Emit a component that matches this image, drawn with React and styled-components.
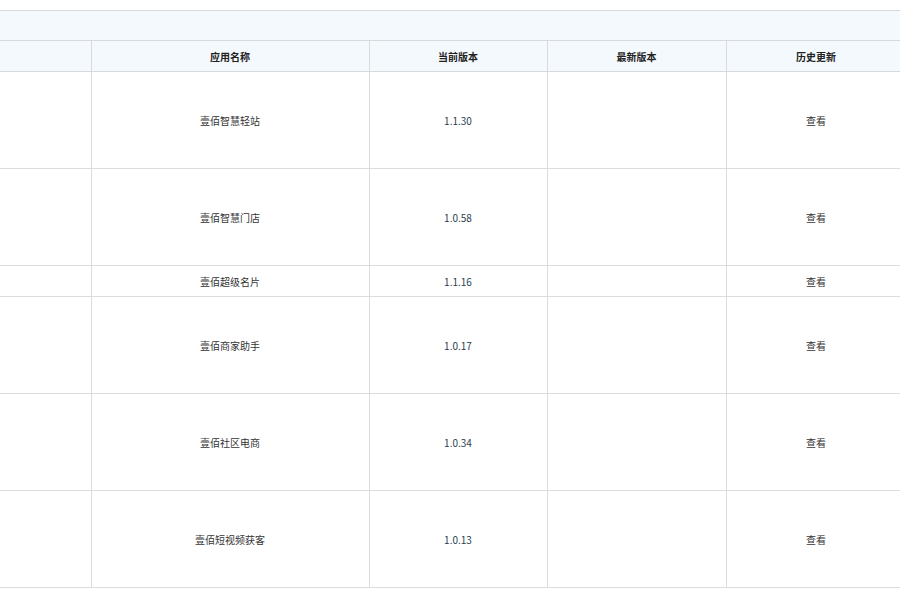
import React from "react";
import styled, { createGlobalStyle } from "styled-components";

const GlobalStyle = createGlobalStyle`
  html, body {
    margin: 0;
    padding: 0;
    background: #ffffff;
    overflow: hidden;
  }
  body {
    font-family: "Noto Sans CJK SC", "Noto Sans", sans-serif;
    color: #333333;
  }
`;

const Page = styled.div`
  width: 900px;
  height: 600px;
  padding-top: 10px;
  box-sizing: border-box;
  overflow: hidden;
`;

const Band = styled.div`
  width: 906px;
  height: 30px;
  background: #f4f9fd;
  border-top: 1px solid #d9d9d9;
  box-sizing: border-box;
`;

const Table = styled.table`
  width: 906px;
  border-collapse: collapse;
  table-layout: fixed;
  font-size: 10px;
`;

const HeadCell = styled.th`
  height: 30px;
  padding: 0;
  background: #f4f9fd;
  border: 1px solid #d9d9d9;
  border-left: ${(p) => (p.$first ? "none" : "1px solid #d9d9d9")};
  font-weight: 700;
  color: #222222;
  text-align: center;
`;

const Cell = styled.td`
  height: ${(p) => p.$h}px;
  padding: 0;
  border: 1px solid #dcdcdc;
  border-left: ${(p) => (p.$first ? "none" : "1px solid #dcdcdc")};
  text-align: center;
  color: ${(p) => (p.$num ? "#2c3e50" : "#333333")};
  box-sizing: border-box;
`;

const rows = [
  { name: "壹佰智慧轻站", ver: "1.1.30", h: 97 },
  { name: "壹佰智慧门店", ver: "1.0.58", h: 97 },
  { name: "壹佰超级名片", ver: "1.1.16", h: 31 },
  { name: "壹佰商家助手", ver: "1.0.17", h: 97 },
  { name: "壹佰社区电商", ver: "1.0.34", h: 97 },
  { name: "壹佰短视频获客", ver: "1.0.13", h: 97 },
];

export default function App() {
  return (
    <Page>
      <GlobalStyle />
      <Band />
      <Table>
        <colgroup>
          <col style={{ width: 91 }} />
          <col style={{ width: 278 }} />
          <col style={{ width: 178 }} />
          <col style={{ width: 179 }} />
          <col style={{ width: 180 }} />
        </colgroup>
        <thead>
          <tr>
            <HeadCell $first />
            <HeadCell>应用名称</HeadCell>
            <HeadCell>当前版本</HeadCell>
            <HeadCell>最新版本</HeadCell>
            <HeadCell>历史更新</HeadCell>
          </tr>
        </thead>
        <tbody>
          {rows.map((r) => (
            <tr key={r.name}>
              <Cell $first $h={r.h} />
              <Cell $h={r.h}>{r.name}</Cell>
              <Cell $h={r.h} $num>
                {r.ver}
              </Cell>
              <Cell $h={r.h} />
              <Cell $h={r.h}>查看</Cell>
            </tr>
          ))}
        </tbody>
      </Table>
    </Page>
  );
}
